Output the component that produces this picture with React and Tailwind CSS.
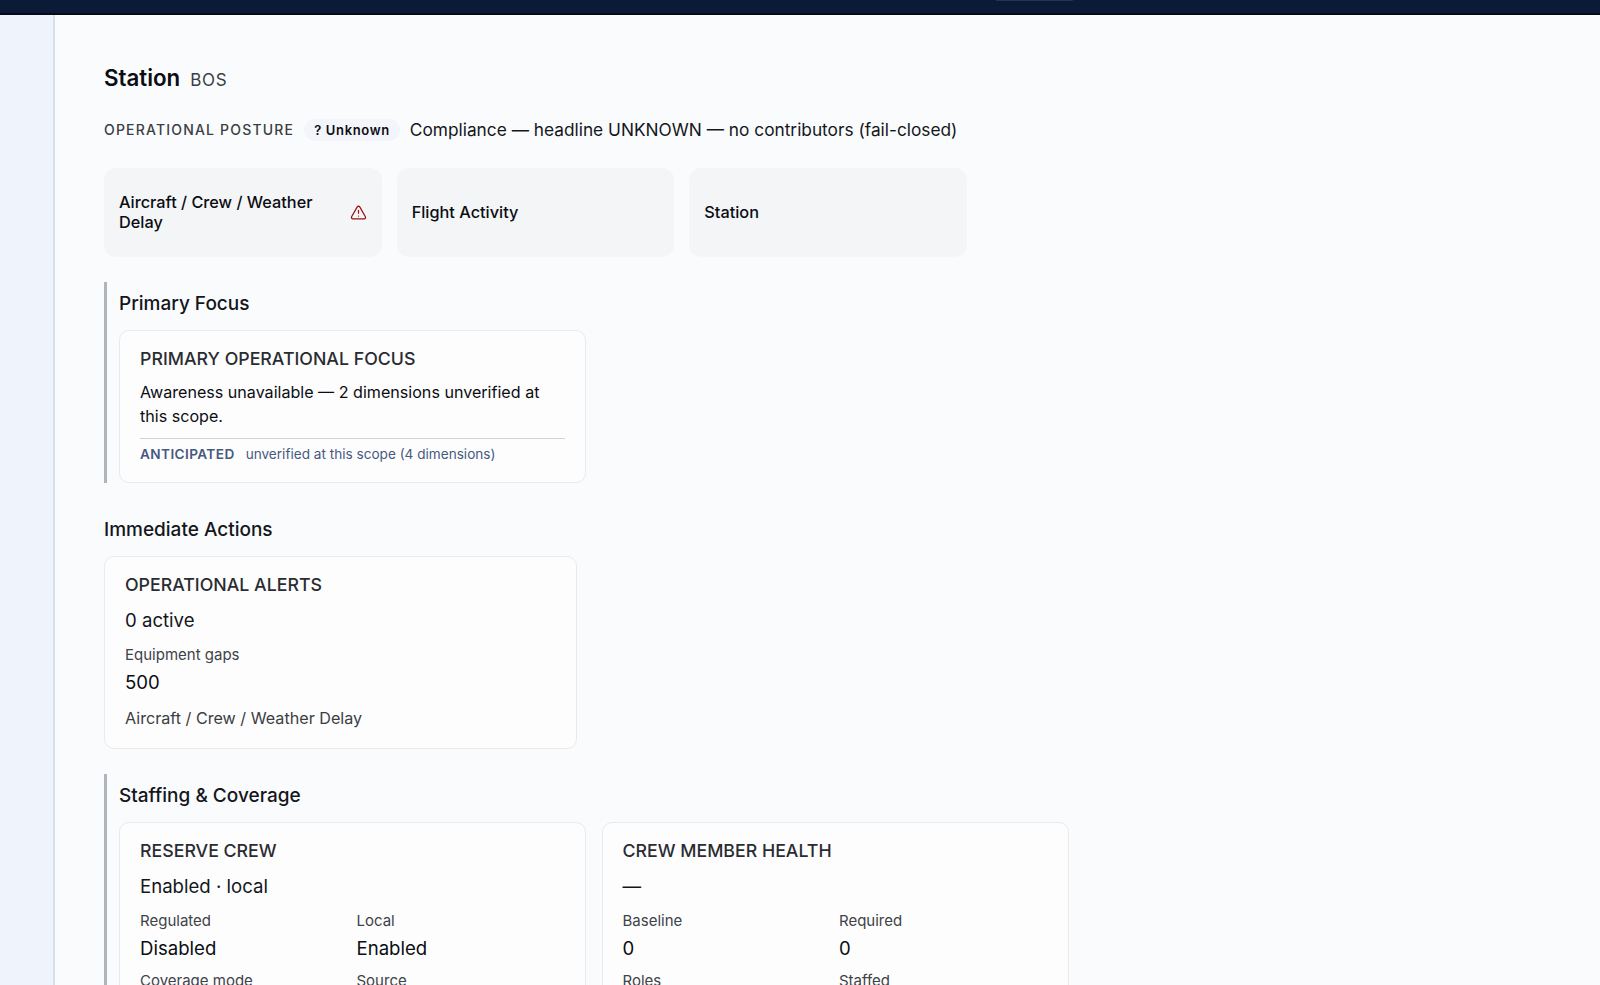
import React from "react";
import { TriangleAlert } from "lucide-react";

const tiles = [
  { label: "Aircraft / Crew / Weather Delay", alert: true },
  { label: "Flight Activity" },
  { label: "Station" },
];

const Stat = ({ label, value }) => (
  <div>
    <div className="text-[15px] leading-5 text-[#3f4247]">{label}</div>
    <div className="mt-[3px] text-[18.6px] leading-[28px] text-[#0b0d12]">{value}</div>
  </div>
);

const Card = ({ title, className = "", children }) => (
  <div
    className={`rounded-[10px] border border-[#e8eaee] bg-[#fdfdfe] px-5 pt-[15px] ${className}`}>
    <div className="text-[17.75px] leading-[26px] font-[450] text-[#2a2c31]">
      {title}
    </div>
    {children}
  </div>
);

const ReserveCard = () => (
  <Card title="RESERVE CREW" className="h-[260px]">
    <div className="mt-[8px] text-[18.6px] leading-[28px] text-[#14161b]">
      Enabled · local
    </div>
    <div className="mt-[11px] grid grid-cols-2 gap-x-2 gap-y-[9px]">
      <Stat label="Regulated" value="Disabled" />
      <Stat label="Local" value="Enabled" />
      <Stat label="Coverage mode" value="—" />
      <Stat label="Source" value="—" />
    </div>
  </Card>
);

const HealthCard = () => (
  <Card title="CREW MEMBER HEALTH" className="h-[260px]">
    <div className="mt-[8px] text-[18.6px] leading-[28px] text-[#14161b]">—</div>
    <div className="mt-[11px] grid grid-cols-2 gap-x-2 gap-y-[9px]">
      <Stat label="Baseline" value="0" />
      <Stat label="Required" value="0" />
      <Stat label="Roles" value="0" />
      <Stat label="Staffed" value="0" />
    </div>
  </Card>
);

export default function App() {
  return (
    <div className="flex h-[985px] flex-col overflow-hidden bg-[#fafbfd] font-['Inter',sans-serif]">
      <header className="h-[15px] shrink-0 border-b-2 border-[#050b18] bg-[#0b1a36]">
        <div className="ml-[996px] h-px w-[77px] rounded-b bg-[#26344f]" />
      </header>

      <div className="flex min-h-0 flex-1">
        <aside className="w-[55px] shrink-0 border-r-2 border-[#d6dfec] bg-[#eef3fc]" />

        <main className="min-w-0 flex-1 pl-[49px] pt-[48px]">
          <div className="flex items-baseline gap-[10px]">
            <h1 className="text-[22.3px] leading-[30px] font-semibold text-[#0b0d12]">
              Station
            </h1>
            <span className="text-[17px] tracking-[0.04em] text-[#3b3e44]">BOS</span>
          </div>

          <div className="mt-[24px] flex h-[24px] items-center">
            <span className="text-sm font-medium tracking-[0.085em] text-[#3b3e44]">
              OPERATIONAL POSTURE
            </span>
            <span className="ml-[10px] rounded-full bg-[#f3f5fb] px-[10px] py-[2px] text-[13px] leading-[18px] font-semibold tracking-[0.05em] text-[#0b0d12]">
              ? Unknown
            </span>
            <span className="ml-[10px] text-[17.3px] text-[#14161b]">
              Compliance — headline UNKNOWN — no contributors (fail-closed)
            </span>
          </div>

          <div className="mt-[26px] grid w-[863px] grid-cols-3 gap-[15px]">
            {tiles.map((t) => (
              <div
                key={t.label}
                className="flex h-[89px] items-center justify-between rounded-[12px] bg-[#f4f5f7] pl-[15px] pr-[15px]">
                <span className="w-[215px] text-[16.3px] leading-[20px] font-medium text-[#0b0d12]">
                  {t.label}
                </span>
                {t.alert && (
                  <TriangleAlert size={17} strokeWidth={1.75} className="text-[#9b1111]" />
                )}
              </div>
            ))}
          </div>

          <section className="mt-[25px] border-l-[3px] border-[#b0b5bc] pl-3">
            <h2 className="pt-[9px] text-[19px] leading-[26px] font-medium text-[#14161b]">
              Primary Focus
            </h2>
            <div className="mt-[13px] w-[467px]">
              <Card title="PRIMARY OPERATIONAL FOCUS" className="h-[153px]">
                <p className="mt-[8px] text-[16.1px] leading-[24px] text-[#0b0d12]">
                  Awareness unavailable — 2 dimensions unverified at this scope.
                </p>
                <div className="mt-[10px] flex gap-[11px] border-t border-[#cfd2d8] pt-[5px] text-[13.6px] leading-[20px] text-[#46597f]">
                  <span className="font-semibold tracking-[0.03em]">ANTICIPATED</span>
                  <span>unverified at this scope (4 dimensions)</span>
                </div>
              </Card>
            </div>
          </section>

          <section className="mt-[34px]">
            <h2 className="text-[19px] leading-[26px] font-medium text-[#14161b]">
              Immediate Actions
            </h2>
            <div className="mt-[13px] w-[473px]">
              <Card title="OPERATIONAL ALERTS" className="h-[193px]">
                <div className="mt-[8px] text-[18.6px] leading-[28px] text-[#14161b]">0 active</div>
                <div className="mt-[11px] text-[15px] leading-5 text-[#3f4247]">Equipment gaps</div>
                <div className="mt-[3px] text-[18.6px] leading-[28px] text-[#0b0d12]">500</div>
                <div className="mt-[10px] text-[16.15px] leading-6 text-[#3b3e44]">
                  Aircraft / Crew / Weather Delay
                </div>
              </Card>
            </div>
          </section>

          <section className="mt-[25px] border-l-[3px] border-[#b0b5bc] pl-3">
            <h2 className="pt-[9px] text-[19px] leading-[26px] font-medium text-[#14161b]">
              Staffing &amp; Coverage
            </h2>
            <div className="mt-[13px] grid w-[949.5px] grid-cols-2 gap-[15.5px]">
              <ReserveCard />
              <HealthCard />
            </div>
          </section>
        </main>
      </div>
    </div>
  );
}
